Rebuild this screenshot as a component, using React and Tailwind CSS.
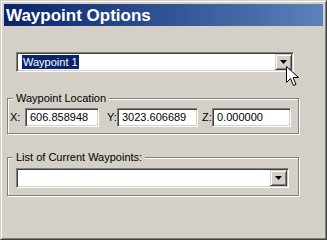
import React from "react";

const sunken =
  "border border-t-[#808080] border-l-[#808080] border-r-white border-b-white shadow-[inset_1px_1px_0_#404040,inset_-1px_-1px_0_#d4d0c8] bg-white";

function DropButton() {
  return (
    <div className="w-[17px] h-[16px] bg-[#d4d0c8] border border-t-[#d4d0c8] border-l-[#d4d0c8] border-r-[#404040] border-b-[#404040] shadow-[inset_1px_1px_0_#fff,inset_-1px_-1px_0_#808080] flex items-center justify-center">
      <svg width="7" height="4" viewBox="0 0 7 4">
        <path d="M0 0H7L3.5 4Z" fill="#000" />
      </svg>
    </div>
  );
}

function Combo({ width, children }) {
  return (
    <div className={`${sunken} h-[20px] flex items-center pl-[3px] pr-[1px]`} style={{ width }}>
      <div className="flex-1 flex items-center">{children}</div>
      <DropButton />
    </div>
  );
}

function Field({ width, value }) {
  return (
    <div className={`${sunken} h-[19px] flex items-center pl-[4px] text-[11px] text-black`} style={{ width }}>
      {value}
    </div>
  );
}

export default function App() {
  return (
    <div className="w-[327px] h-[240px] bg-[#d4d0c8] border border-t-[#d4d0c8] border-l-[#d4d0c8] border-r-[#404040] border-b-[#404040] font-['Liberation_Sans',Arial,sans-serif]">
      <div className="relative w-full h-full border border-t-white border-l-white border-r-[#808080] border-b-[#808080] p-[2px]">
        <div className="h-[22px] bg-gradient-to-r from-[#0a246a] to-[#5d81bb] flex items-center pl-[2px]">
          <span className="text-white font-bold text-[17px] leading-none">Waypoint Options</span>
        </div>
        <div className="pt-[26px]">
          <div className="pl-[12px]">
            <Combo width="278px">
              <span className="bg-[#0a246a] text-white text-[11px] leading-[14px] px-[1px] ml-[2px]">Waypoint 1</span>
            </Combo>
          </div>

          <div className="relative ml-[3px] mt-[26px] w-[292px] h-[36px] border border-[#808080] shadow-[inset_1px_1px_0_#fff,1px_1px_0_#fff]">
            <span className="absolute left-[5px] top-[-8px] px-[3px] bg-[#d4d0c8] text-[11px] leading-[14px] text-black">Waypoint Location</span>
            <div className="flex items-center pl-[2px] pt-[9px] text-[11px] text-black">
              <span className="w-[15px]">X:</span>
              <Field width="74px" value="606.858948" />
              <span className="w-[18px] pl-[8px]">Y:</span>
              <Field width="81px" value="3023.606689" />
              <span className="w-[14px] pl-[4px]">Z:</span>
              <Field width="79px" value="0.000000" />
            </div>
          </div>

          <div className="relative ml-[3px] mt-[23px] w-[292px] h-[39px] border border-[#808080] shadow-[inset_1px_1px_0_#fff,1px_1px_0_#fff]">
            <span className="absolute left-[5px] top-[-8px] px-[3px] bg-[#d4d0c8] text-[11px] leading-[14px] text-black">List of Current Waypoints:</span>
            <div className="pl-[8px] pt-[10px]">
              <Combo width="273px" />
            </div>
          </div>
        </div>

        <svg className="absolute left-[284px] top-[64px]" width="13" height="21" viewBox="0 0 13 21">
          <path
            d="M0.5 0.5V16.5L4.5 12.5L7.5 19.5L10 18.5L7 11.5H12.5Z"
            fill="#fff"
            stroke="#000"
            strokeWidth="1"
            strokeLinejoin="miter"
          />
        </svg>
      </div>
    </div>
  );
}
